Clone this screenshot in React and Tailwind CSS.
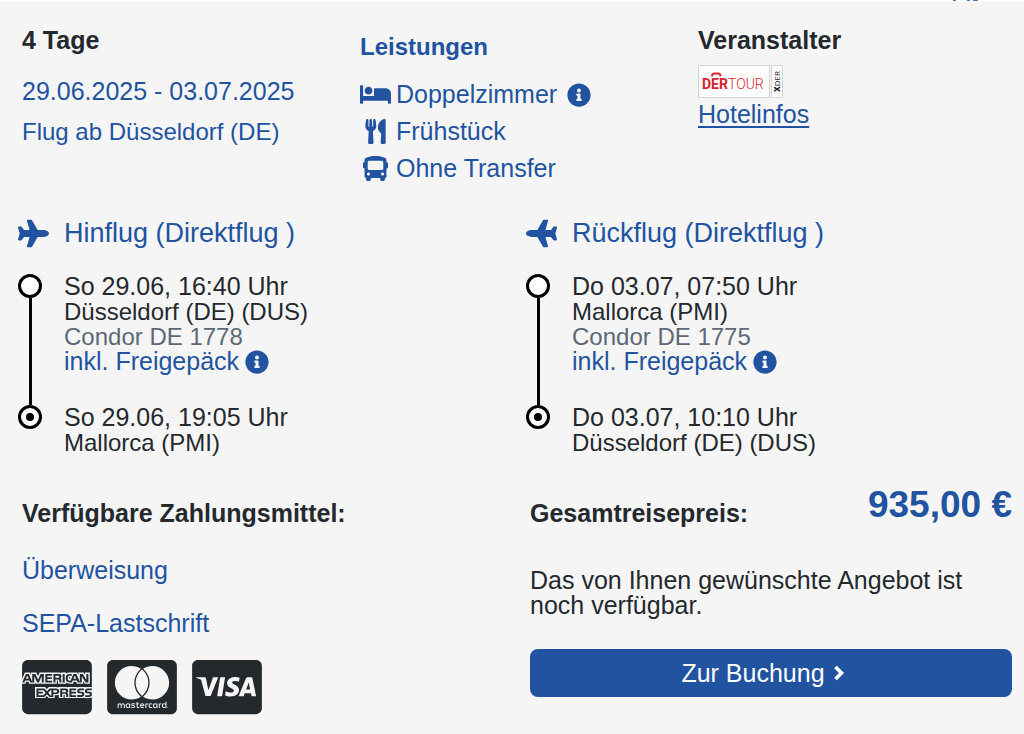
import {
  FaBed,
  FaBus,
  FaCcAmex,
  FaCcMastercard,
  FaCcVisa,
  FaInfoCircle,
  FaPlane,
  FaUtensils,
} from 'react-icons/fa'

const services = [
  { icon: FaBed, label: 'Doppelzimmer', info: true },
  { icon: FaUtensils, label: 'Frühstück' },
  { icon: FaBus, label: 'Ohne Transfer' },
]

const flights = [
  {
    title: 'Hinflug (Direktflug )',
    departure: { time: 'So 29.06, 16:40 Uhr', airport: 'Düsseldorf (DE) (DUS)' },
    arrival: { time: 'So 29.06, 19:05 Uhr', airport: 'Mallorca (PMI)' },
    carrier: 'Condor DE 1778',
  },
  {
    title: 'Rückflug (Direktflug )',
    departure: { time: 'Do 03.07, 07:50 Uhr', airport: 'Mallorca (PMI)' },
    arrival: { time: 'Do 03.07, 10:10 Uhr', airport: 'Düsseldorf (DE) (DUS)' },
    carrier: 'Condor DE 1775',
    back: true,
  },
]

const cards = [
  { icon: FaCcAmex, label: 'American Express' },
  { icon: FaCcMastercard, label: 'Mastercard' },
  { icon: FaCcVisa, label: 'Visa' },
]

const InfoButton = ({ label }) => (
  <button type="button" aria-label={label} className="cursor-pointer text-[#2153a0]">
    <FaInfoCircle className="size-6" />
  </button>
)

const OperatorLogo = () => (
  <svg viewBox="0 0 85 33" role="img" aria-label="DERTOUR XDER" className="h-[33px] w-[85px]">
    <rect x="0.5" y="0.5" width="71" height="32" fill="#fff" stroke="#d4d4d4" />
    <rect x="73.5" y="0.5" width="11" height="32" fill="#fff" stroke="#d4d4d4" />
    <path d="M14 11.500V11q0-2.500 2.500-2.500h3.500q2.500 0 2.500 2.500v.5" fill="none" stroke="#d8232f" strokeWidth="1.800" />
    <text x="4" y="23.500" fontFamily="Roboto, sans-serif" fontSize="14" fontWeight="700" fill="#d8232f">
      DER
    </text>
    <text x="30" y="23.500" fontFamily="Roboto, sans-serif" fontSize="14" fontWeight="300" fill="#d8232f">
      TOUR
    </text>
    <text transform="translate(82 27) rotate(-90)" fontFamily="Open Sans, sans-serif" fontSize="8" fill="#222">
      <tspan fontWeight="800">X</tspan>DER
    </text>
  </svg>
)

const ChevronRight = () => (
  <svg viewBox="0 0 12 16" aria-hidden="true" className="h-4 w-3">
    <path d="M2.500 2L8.500 8L2.500 14" fill="none" stroke="currentColor" strokeWidth="3.600" />
  </svg>
)

const Stop = ({ time, airport }) => (
  <>
    <p>{time}</p>
    <p className="text-[24px]">{airport}</p>
  </>
)

const Flight = ({ title, departure, arrival, carrier, back }) => (
  <section>
    <h3 className="flex items-center text-[27px] leading-8 text-[#2153a0]">
      <span className="-ml-1 w-[46px]">
        <FaPlane className={back ? 'size-[31px] -scale-x-100' : 'size-[31px]'} />
      </span>
      {title}
    </h3>
    <div className="mt-[25px] flex">
      <div className="-ml-1 mr-[22px] flex flex-col items-center pb-[26px]">
        <span className="size-6 rounded-full border-3 border-black bg-white" />
        <span className="w-[3px] grow bg-black" />
        <span className="flex size-6 items-center justify-center rounded-full border-3 border-black bg-white">
          <span className="size-2 rounded-full bg-black" />
        </span>
      </div>
      <div>
        <Stop {...departure} />
        <p className="text-[24px] text-[#5d6874]">{carrier}</p>
        <p className="flex items-center gap-1.5 text-[#2153a0]">
          inkl. Freigepäck <InfoButton label="Informationen zum Freigepäck" />
        </p>
        <div className="mt-[31px]">
          <Stop {...arrival} />
        </div>
      </div>
    </div>
  </section>
)

export default function App() {
  return (
    <main className="min-h-screen bg-[#f5f5f5] font-['Helvetica_Neue','Liberation_Sans',sans-serif] text-[25px] leading-[25px] text-[#24292e]">
      {/* lower edge of the previous offer */}
      <div className="flex h-0.5 justify-end bg-white pr-[45px]">
        <svg viewBox="0 0 27 2" aria-hidden="true" className="h-0.5 w-[27px]" fill="#4f78c0">
          <rect x="1" width="3" height="1" />
          <rect x="15" width="3" height="1" />
          <rect x="21" width="5" height="1" />
        </svg>
      </div>

      <div className="pr-3 pl-[22px]">
        <div className="grid grid-cols-3 gap-6 pt-[26px]">
          <section>
            <h2 className="font-bold">4 Tage</h2>
            <p className="mt-[26px] text-[#2153a0]">29.06.2025 - 03.07.2025</p>
            <p className="mt-[15px] text-[24px] text-[#2153a0]">Flug ab Düsseldorf (DE)</p>
          </section>
          <section className="pt-[6px] text-[#2153a0]">
            <h2 className="text-[24px] font-bold">Leistungen</h2>
            <ul className="mt-[17px] leading-[37px]">
              {services.map(({ icon: Icon, label, info }) => (
                <li key={label} className="flex items-center">
                  <span className="mr-[5px] flex w-[31px] justify-center">
                    <Icon className={info ? 'size-[31px]' : 'size-[25px]'} />
                  </span>
                  <span className="mr-[10px]">{label}</span>
                  {info && <InfoButton label="Informationen zum Zimmer" />}
                </li>
              ))}
            </ul>
          </section>
          <section>
            <h2 className="font-bold">Veranstalter</h2>
            <div className="mt-3">
              <OperatorLogo />
            </div>
            <a href="#hotelinfos" className="mt-1 inline-block text-[#2153a0] underline underline-offset-3">
              Hotelinfos
            </a>
          </section>
        </div>

        <div className="mt-[30px] grid grid-cols-2 gap-[26px]">
          {flights.map(flight => (
            <Flight key={flight.title} {...flight} />
          ))}
        </div>

        <div className="mt-[46px] grid grid-cols-2 gap-[26px]">
          <section>
            <h2 className="font-bold">Verfügbare Zahlungsmittel:</h2>
            <p className="mt-8 text-[#2153a0]">Überweisung</p>
            <p className="mt-7 text-[#2153a0]">SEPA-Lastschrift</p>
            <ul className="mt-5 flex gap-[15px]">
              {cards.map(({ icon: Icon, label }) => (
                <li key={label}>
                  <Icon aria-label={label} className="h-[62px] w-[70px]" />
                </li>
              ))}
            </ul>
          </section>
          <section>
            <div className="flex justify-between">
              <h2 className="font-bold">Gesamtreisepreis:</h2>
              <strong className="text-[37px] leading-2 text-[#2153a0]">935,00 €</strong>
            </div>
            <p className="mt-[42px]">Das von Ihnen gewünschte Angebot ist noch verfügbar.</p>
            <button
              type="button"
              className="mt-[31px] flex h-12 w-full cursor-pointer items-center justify-center gap-2 rounded-lg bg-[#2153a0] pr-4 text-white"
            >
              Zur Buchung <ChevronRight />
            </button>
          </section>
        </div>
      </div>
    </main>
  )
}
